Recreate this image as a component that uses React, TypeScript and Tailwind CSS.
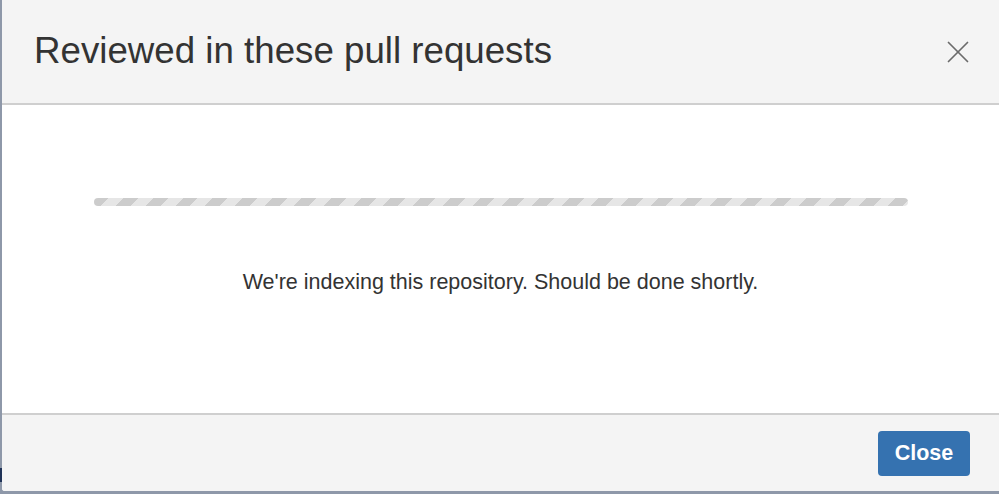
import { X } from 'lucide-react'

export default function App() {
  return (
    <div className="flex h-[494px] w-[999px] overflow-hidden bg-[#8e98a9] font-['Liberation_Sans',Arial,sans-serif]">
      <div className="flex w-[2px] shrink-0 flex-col">
        <div className="h-[468px]" />
        <div className="h-[14px] bg-[#1f3257]" />
      </div>
      <div className="flex h-[491px] flex-1 flex-col overflow-hidden rounded-bl-[3px] bg-white">
        <div className="flex h-[105px] shrink-0 items-center justify-between border-b-2 border-[#cfcfcf] bg-[#f4f4f4] pl-8 pr-[22px]">
          <h2 className="text-[36.7px] leading-none text-[#333333]">Reviewed in these pull requests</h2>
          <button className="text-[#6b6b6b]">
            <X size={38} strokeWidth={1.1} />
          </button>
        </div>

        <div className="flex flex-1 flex-col items-center pt-[93px]">
          <div className="h-2 w-[814px] rounded-full bg-[repeating-linear-gradient(135deg,#cccccc_0px,#cccccc_10.5px,#e6e6e6_10.5px,#e6e6e6_21px)]" />
          <p className="mt-[66px] text-[21.5px] leading-none text-[#333333]">
            We're indexing this repository. Should be done shortly.
          </p>
        </div>

        <div className="flex h-[78px] shrink-0 items-center justify-end border-t-2 border-[#cfcfcf] bg-[#f4f4f4] pr-[29px]">
          <button className="h-[45px] w-[92px] rounded-[4px] bg-[#3572b0] text-[21.5px] font-bold text-white">
            Close
          </button>
        </div>
      </div>
    </div>
  )
}
